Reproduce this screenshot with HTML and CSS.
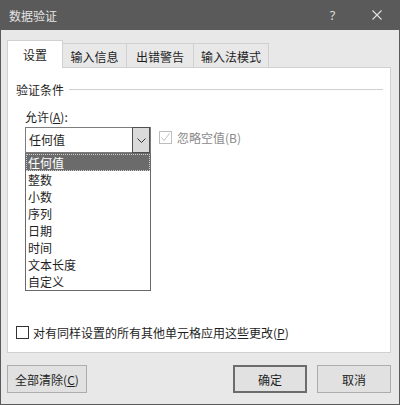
FILE: index.html
```html
<!DOCTYPE html>
<html lang="zh-CN">
<head>
<meta charset="utf-8">
<title>数据验证</title>
<link rel="stylesheet" href="styles.css">
</head>
<body>
<div class="window">
  <div class="titlebar">
    <span class="title">数据验证</span>
    <span class="tb-btn help">?</span>
    <span class="tb-btn close">
      <svg width="10" height="10" viewBox="0 0 10 10"><path d="M0.5 0.5 L9.5 9.5 M9.5 0.5 L0.5 9.5" stroke="#e2e2e2" stroke-width="1.1" fill="none"/></svg>
    </span>
  </div>
  <div class="content">
    <div class="tabs">
      <div class="tab active">设置</div>
      <div class="tab t1">输入信息</div>
      <div class="tab t2">出错警告</div>
      <div class="tab t3">输入法模式</div>
    </div>
    <div class="panel">
      <div class="group-head"><span>验证条件</span><span class="rule"></span></div>
      <div class="allow-label">允许(<u>A</u>):</div>
      <div class="combo-row">
        <div class="combo-wrap">
          <div class="combo">
            <span class="combo-value">任何值</span>
            <span class="combo-btn">
              <svg width="9" height="5" viewBox="0 0 9 5"><path d="M0.5 0.5 L4.5 4.5 L8.5 0.5" stroke="#333" stroke-width="1" fill="none"/></svg>
            </span>
          </div>
          <ul class="dropdown">
            <li class="selected">任何值</li>
            <li>整数</li>
            <li>小数</li>
            <li>序列</li>
            <li>日期</li>
            <li>时间</li>
            <li>文本长度</li>
            <li>自定义</li>
          </ul>
        </div>
        <div class="check disabled">
          <span class="box">
            <svg width="11" height="11" viewBox="0 0 11 11"><path d="M1.5 5.5 L4 8.5 L9.5 1.5" stroke="#c2c2c2" stroke-width="1" fill="none"/></svg>
          </span>
          <span class="check-text">忽略空值(B)</span>
        </div>
      </div>
      <div class="spacer"></div>
      <div class="check apply">
        <span class="box"></span>
        <span class="check-text">对有同样设置的所有其他单元格应用这些更改(<u>P</u>)</span>
      </div>
    </div>
    <div class="buttons">
      <div class="btn clear">全部清除(<u>C</u>)</div>
      <div class="btn ok">确定</div>
      <div class="btn cancel">取消</div>
    </div>
  </div>
</div>
</body>
</html>
```

FILE: styles.css
```css
html, body {
  margin: 0;
  padding: 0;
  background: #e8e8e9;
}

body {
  font-family: "Noto Sans CJK SC", "Noto Sans", sans-serif;
  font-size: 12px;
  color: #1e1e1e;
}

.window {
  width: 400px;
  height: 405px;
  box-sizing: border-box;
  border: 1px solid #5a5a5a;
  border-top: 0;
  background: #e8e8e9;
  display: flex;
  flex-direction: column;
}

.titlebar {
  height: 30px;
  flex: none;
  background: #5a5a5a;
  color: #e4e4e4;
  display: flex;
  align-items: center;
}

.title {
  flex: 1;
  padding-left: 8px;
  line-height: 17px;
}

.tb-btn {
  height: 30px;
  display: flex;
  align-items: center;
  justify-content: center;
}

.help {
  width: 45px;
  font-family: "Noto Sans", sans-serif;
  font-size: 13px;
  color: #dcdcdc;
}

.close {
  width: 44px;
}

.content {
  flex: 1;
  display: flex;
  flex-direction: column;
  padding: 10px 8px 11px 6px;
}

.tabs {
  height: 27px;
  display: flex;
  align-items: flex-end;
  position: relative;
  z-index: 1;
}

.tab {
  height: 24px;
  box-sizing: border-box;
  border-top: 1px solid #d0d0d0;
  border-right: 1px solid #d0d0d0;
  display: flex;
  align-items: center;
  justify-content: center;
  padding-top: 1px;
  line-height: 17px;
}

.tab.active {
  width: 56px;
  height: 28px;
  margin-bottom: -1px;
  background: #fff;
  border-left: 1px solid #d0d0d0;
  padding-top: 0;
}

.t1 { width: 64px; }
.t2 { width: 67px; }
.t3 { width: 75px; }

.panel {
  height: 286px;
  box-sizing: border-box;
  border: 1px solid #d0d0d0;
  background: #fff;
  padding: 13px 7px 11px 8px;
  display: flex;
  flex-direction: column;
}

.group-head {
  display: flex;
  align-items: center;
  height: 17px;
  line-height: 17px;
}

.rule {
  flex: 1;
  height: 1px;
  background: #cfcfcf;
  margin-left: 5px;
}

.allow-label {
  margin-top: 10px;
  padding-left: 9px;
  line-height: 17px;
}

.combo-row {
  margin-top: 2px;
  padding-left: 9px;
  display: flex;
  align-items: flex-start;
}

.combo-wrap {
  position: relative;
  width: 126px;
}

.combo {
  height: 26px;
  box-sizing: border-box;
  border: 1px solid #7d7d7d;
  background: #fff;
  display: flex;
}

.combo-value {
  flex: 1;
  padding-left: 3px;
  line-height: 24px;
}

.combo-btn {
  width: 18px;
  box-sizing: border-box;
  margin: -1px 0;
  border: 1px solid #4f4f4f;
  background: #dadada;
  display: flex;
  align-items: center;
  justify-content: center;
}

.dropdown {
  position: absolute;
  top: 26px;
  left: 0;
  width: 126px;
  box-sizing: border-box;
  margin: 0;
  padding: 0;
  list-style: none;
  border: 1px solid #6a6a6a;
  background: #fff;
}

.dropdown li {
  height: 17px;
  line-height: 17px;
  padding-left: 2px;
}

.dropdown li.selected {
  background: #6b6b6b;
  color: #fff;
  outline: 1px dotted #cfcfcf;
  outline-offset: -1px;
}

.check {
  display: flex;
  align-items: center;
  line-height: 17px;
}

.box {
  width: 13px;
  height: 13px;
  box-sizing: border-box;
  border: 1px solid #333;
  background: #fff;
  display: flex;
  align-items: center;
  justify-content: center;
}

.check.disabled {
  margin-left: 8px;
  margin-top: 2px;
}

.check.disabled .box {
  border-color: #bdbdbd;
}

.check.disabled .check-text {
  margin-left: 5px;
  color: #8a8a8a;
}

.spacer {
  flex: 1;
}

.check.apply .check-text {
  margin-left: 4px;
}

.buttons {
  margin-top: 12px;
  height: 28px;
  display: flex;
}

.btn {
  height: 28px;
  box-sizing: border-box;
  border: 1px solid #adadad;
  background: #e1e1e1;
  display: flex;
  align-items: center;
  justify-content: center;
  line-height: 17px;
}

.btn.clear {
  width: 80px;
}

.btn.ok {
  width: 74px;
  margin-left: auto;
  border: 2px solid #6c6c6c;
}

.btn.cancel {
  width: 74px;
  margin-left: 10px;
}
```
